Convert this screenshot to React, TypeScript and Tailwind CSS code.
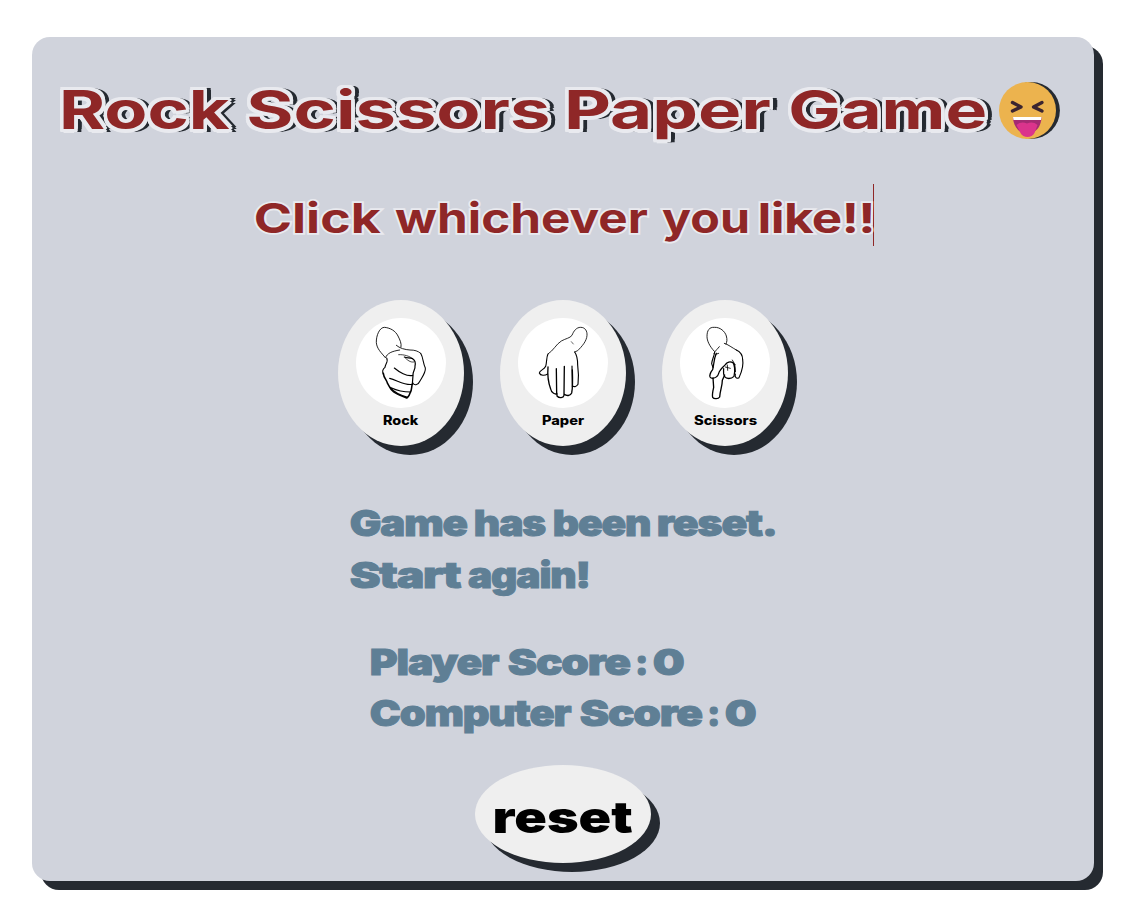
import { useLayoutEffect, useRef, useState } from "react";
import type { ReactNode } from "react";

// Stretches a word so that its ink fills the width of its box.
function Word({ children, className }: { children: string; className: string }) {
  const box = useRef<HTMLSpanElement>(null);
  const [transform, setTransform] = useState("none");

  useLayoutEffect(() => {
    const el = box.current;
    const ctx = document.createElement("canvas").getContext("2d");
    if (!el || !ctx) return;
    const style = getComputedStyle(el);
    ctx.font = `${style.fontWeight} ${style.fontSize} ${style.fontFamily}`;
    ctx.letterSpacing = style.letterSpacing === "normal" ? "0px" : style.letterSpacing;
    const m = ctx.measureText(children);
    const ink = m.actualBoundingBoxLeft + m.actualBoundingBoxRight;
    const scale = el.clientWidth / ink;
    setTransform(`translateX(${m.actualBoundingBoxLeft * scale}px) scaleX(${scale})`);
  }, [children]);

  return (
    <span ref={box} className={`block shrink-0 whitespace-nowrap ${className}`}>
      <span className="block w-max origin-left" style={{ transform }}>
        {children}
      </span>
    </span>
  );
}

function LaughingFace() {
  return (
    <svg className="mt-[2px] ml-[14px] h-[57px] w-[61px] shrink-0" viewBox="0 0 61 57">
      <circle cx="32.5" cy="28.5" r="28.4" fill="#252a31" />
      <circle cx="28.5" cy="28.5" r="28.5" fill="#ecb34e" />
      <g fill="none" stroke="#3b2530" strokeWidth="3.4" strokeLinecap="round" strokeLinejoin="round">
        <path d="M13.5 20.5 L22 25 L13.5 29" />
        <path d="M43 20.5 L34.5 25 L43 29" />
      </g>
      <path d="M14 35 H42.5 C42.5 43 38 49 34 50 H22 C18 48 14 42 14 35Z" fill="#a52b72" />
      <path d="M14 35 H42.5 L42 38 H14.5Z" fill="#fff" />
      <path d="M17.5 43 Q22 39 28 41.5 Q34 39 38.5 43 L35.5 51 C33 56.3 24 56.3 21.5 51Z" fill="#db348c" />
    </svg>
  );
}

function RockHand() {
  return (
    <svg className="size-[90px] rounded-full bg-white" viewBox="78 84 270 270" fill="none" stroke="#000" strokeLinecap="round" strokeLinejoin="round">
      <path strokeWidth="2.6" d="M166 203 C153 187 141 177 139 158 C138 137 149 111 164 112 C181 114 196 122 204 138 C210 150 215 160 213 171 M167 202 C172 190 184 184 209 180 M199 166 C209 175 225 179 240 180 C254 180 264 183 272 190" />
      <path strokeWidth="3.2" d="M272 190 C280 203 279 220 286 234 C288 248 275 263 268 276 C265 285 251 288 248 278 M170 204 C176 214 166 222 165 232 C154 240 158 248 160 253" />
      <path strokeWidth="4.6" d="M160 250 C161 264 171 270 172 279 C179 290 180 298 191 306 C202 314 214 318 231 324 C238 318 239 314 241 307 C246 299 244 291 247 282" />
      <path strokeWidth="3.6" d="M247 282 L249 256 C247 246 257 239 255 228 C258 216 255 211 248 206 C237 203 230 204 223 201" />
      <path strokeWidth="3.4" d="M193 234 C207 246 231 260 248 256 M179 265 C202 271 227 288 247 283 M183 293 C202 302 222 306 242 306" />
      <path strokeWidth="2.2" d="M206 194 C220 193 240 198 247 206 M225 203 C232 210 241 218 251 216" />
      <path strokeWidth="4" d="M180 292 C192 307 219 318 233 322" />
    </svg>
  );
}

function PaperHand() {
  return (
    <svg className="size-[90px] rounded-full bg-white" viewBox="84 84 270 270" fill="none" stroke="#000" strokeLinecap="round" strokeLinejoin="round">
      <path strokeWidth="2.5" d="M174 192 C190 182 199 162 214 153 C228 145 239 145 246 136 C251 123 259 112 272 112 C286 112 292 124 291 136 C290 154 275 170 263 182 L254 186" />
      <path strokeWidth="1.8" d="M244 155 L250 162" />
      <path strokeWidth="3.4" d="M174 192 C169 201 171 216 167 229 C162 240 149 240 148 249 C151 258 165 257 173 252 M254 186 C263 198 263 213 263 225 C266 247 266 265 264 283 C260 290 253 292 248 288" />
      <path strokeWidth="4" d="M174 231 C172 255 175 278 182 297 C184 309 197 315 201 310 L201 318 C208 326 220 324 222 316 L222 312 C230 319 241 318 245 309 C249 291 248 267 247 240 M199 236 L200 311 M223 229 L222 316" />
      <path strokeWidth="3.4" d="M246 228 L247 290" />
    </svg>
  );
}

function ScissorsHand() {
  return (
    <svg className="size-[90px] rounded-full bg-white" viewBox="75 84 270 270" fill="none" stroke="#000" strokeLinecap="round" strokeLinejoin="round">
      <path strokeWidth="2.6" d="M178 184 C164 169 156 153 156 139 C156 121 163 111 178 112 C195 111 210 124 214 138 C217 149 216 155 213 162 M177 190 C182 180 188 177 193 170 M208 160 C219 163 231 173 244 180" />
      <path strokeWidth="3.4" d="M244 180 C257 186 263 194 263 209 C267 231 259 247 252 263 C243 268 239 260 241 252 M239 223 L241 245 M179 186 C177 201 171 208 170 221 L174 233" />
      <path strokeWidth="3.8" d="M184 190 C176 208 177 224 173 239 C165 248 164 258 165 261 C170 268 181 264 185 260 C191 257 190 248 195 242 C200 233 205 231 211 224 C216 216 226 214 234 218 C241 229 239 249 237 259 C228 268 214 267 209 260 C203 250 206 242 206 236" />
      <path strokeWidth="4" d="M174 264 L176 292 C173 305 171 315 173 322 C177 328 190 327 194 321 C195 302 202 289 202 271 L209 255" />
      <path strokeWidth="2.5" d="M211 231 L226 235 M217 225 L218 241 M232 210 L240 224 M182 193 L191 190" />
    </svg>
  );
}

function HandButton({ children, label, labelClass }: { children: ReactNode; label: string; labelClass: string }) {
  return (
    <button className="flex h-[146px] w-[126px] shrink-0 flex-col items-center rounded-[50%] bg-[#efefef] pt-[18px] font-extrabold text-black shadow-[9px_9px_0_#252a31]">
      {children}
      <span className="flex pt-[5px] text-[12.5px] leading-[16px]">
        <Word className={labelClass}>{label}</Word>
      </span>
    </button>
  );
}

export default function App() {
  return (
    <main className="h-[922px] w-[1125px] overflow-hidden bg-white pt-[37px] pl-[32px] font-['Inter','Liberation_Sans',sans-serif]">
      <section className="h-[844px] w-[1062px] rounded-[18px] bg-[#d0d3dc] pt-[43px] shadow-[9px_9px_0_#252a31]">
        <h1 className="flex h-[60px] pl-[31px] text-[53px] leading-[60px] font-bold text-[#8f2727] [text-shadow:2.6px_0_#e9eaef,-2.6px_0_#e9eaef,0_3.5px_#e9eaef,0_-3.5px_#e9eaef,2.4px_3px_#e9eaef,-2.4px_3px_#e9eaef,2.4px_-3px_#e9eaef,-2.4px_-3px_#e9eaef,2.6px_1.5px_#e9eaef,-2.6px_1.5px_#e9eaef,2.6px_-1.5px_#e9eaef,-2.6px_-1.5px_#e9eaef,5.6px_0_#252a31,5.4px_2.5px_#252a31,5.4px_-2.5px_#252a31,3.4px_2.5px_#252a31,3.4px_-2.5px_#252a31]">
          <Word className="w-[167px]">Rock</Word>
          <Word className="ml-[19px] w-[299px]">Scissors</Word>
          <Word className="ml-[20px] w-[202px]">Paper</Word>
          <Word className="ml-[21px] w-[194px]">Game</Word>
          <LaughingFace />
        </h1>

        <h2 className="mt-[44px] ml-[223px] flex h-[62px] w-[619px] border-r border-[#8f2727] pt-[6px] text-[41px] leading-[56px] font-bold text-[#8f2727] [-webkit-text-stroke:3.5px_#e9eaef] [paint-order:stroke_fill]">
          <Word className="w-[126px]">Click</Word>
          <Word className="ml-[14px] w-[252px]">whichever</Word>
          <Word className="ml-[15px] w-[85px]">you</Word>
          <Word className="ml-[13px] w-[112px] tracking-[-0.5px]">like!!</Word>
        </h2>

        <div className="mt-[54px] flex gap-[36px] pl-[306px]">
          <HandButton label="Rock" labelClass="w-[36px]">
            <RockHand />
          </HandButton>
          <HandButton label="Paper" labelClass="w-[43px]">
            <PaperHand />
          </HandButton>
          <HandButton label="Scissors" labelClass="w-[63px]">
            <ScissorsHand />
          </HandButton>
        </div>

        <div className="mt-[51px] pl-[319px] text-[36px] leading-[53px] font-black tracking-[-1px] text-[#5f7f95] [-webkit-text-stroke:1px_#5f7f95]">
          <p className="flex h-[52px]">
            <Word className="w-[116px]">Game</Word>
            <Word className="ml-[8px] w-[71px]">has</Word>
            <Word className="ml-[8px] w-[96px]">been</Word>
            <Word className="ml-[8px] w-[117px]">reset.</Word>
          </p>
          <p className="flex h-[52px]">
            <Word className="w-[110px]">Start</Word>
            <Word className="ml-[7px] w-[120px]">again!</Word>
          </p>
        </div>

        <div className="mt-[35px] pl-[339px] text-[36px] leading-[52px] font-black tracking-[-1px] text-[#5f7f95] [-webkit-text-stroke:1px_#5f7f95]">
          <p className="flex h-[51px]">
            <Word className="w-[129px]">Player</Word>
            <Word className="ml-[9px] w-[121px]">Score</Word>
            <Word className="ml-[8px] w-[8px]">:</Word>
            <Word className="ml-[8px] w-[30px]">0</Word>
          </p>
          <p className="flex h-[51px]">
            <Word className="w-[201px]">Computer</Word>
            <Word className="ml-[9px] w-[121px]">Score</Word>
            <Word className="ml-[8px] w-[8px]">:</Word>
            <Word className="ml-[8px] w-[30px]">0</Word>
          </p>
        </div>

        <button className="mt-[27px] ml-[443px] flex h-[98px] w-[176px] justify-center rounded-[50%] bg-[#efefef] pt-[22px] text-[44px] leading-[60px] font-black text-black shadow-[9px_9px_0_#252a31]">
          <Word className="w-[137px]">reset</Word>
        </button>
      </section>
    </main>
  );
}
